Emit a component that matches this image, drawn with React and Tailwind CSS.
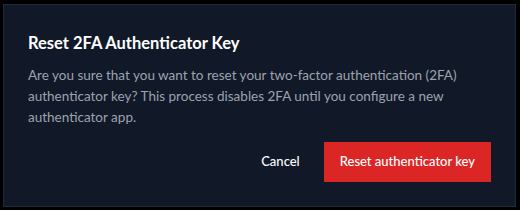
import React from "react";

const App = () => {
  return (
    <div className="w-[520px] h-[210px] bg-black pt-1 pl-[3px] font-['Lato',sans-serif]">
      <div className="w-[513px] h-[203px] bg-[#111827] border border-[#1f2937] px-6 pt-6 pb-6 flex flex-col">
        <h2 className="text-[16.5px] leading-[28px] font-bold text-white">Reset 2FA Authenticator Key</h2>
        <p className="mt-2 text-[13.5px] leading-[21px] text-[#9ca3af]">
          Are you sure that you want to reset your two-factor authentication (2FA) authenticator key? This process disables 2FA until you configure a new authenticator app.
        </p>
        <div className="mt-auto flex items-center justify-end gap-2">
          <button className="h-10 px-4 text-[13px] font-medium text-white">Cancel</button>
          <button className="h-10 px-4 bg-[#dc2626] text-[13px] font-medium text-white">Reset authenticator key</button>
        </div>
      </div>
    </div>
  );
};

export default App;
